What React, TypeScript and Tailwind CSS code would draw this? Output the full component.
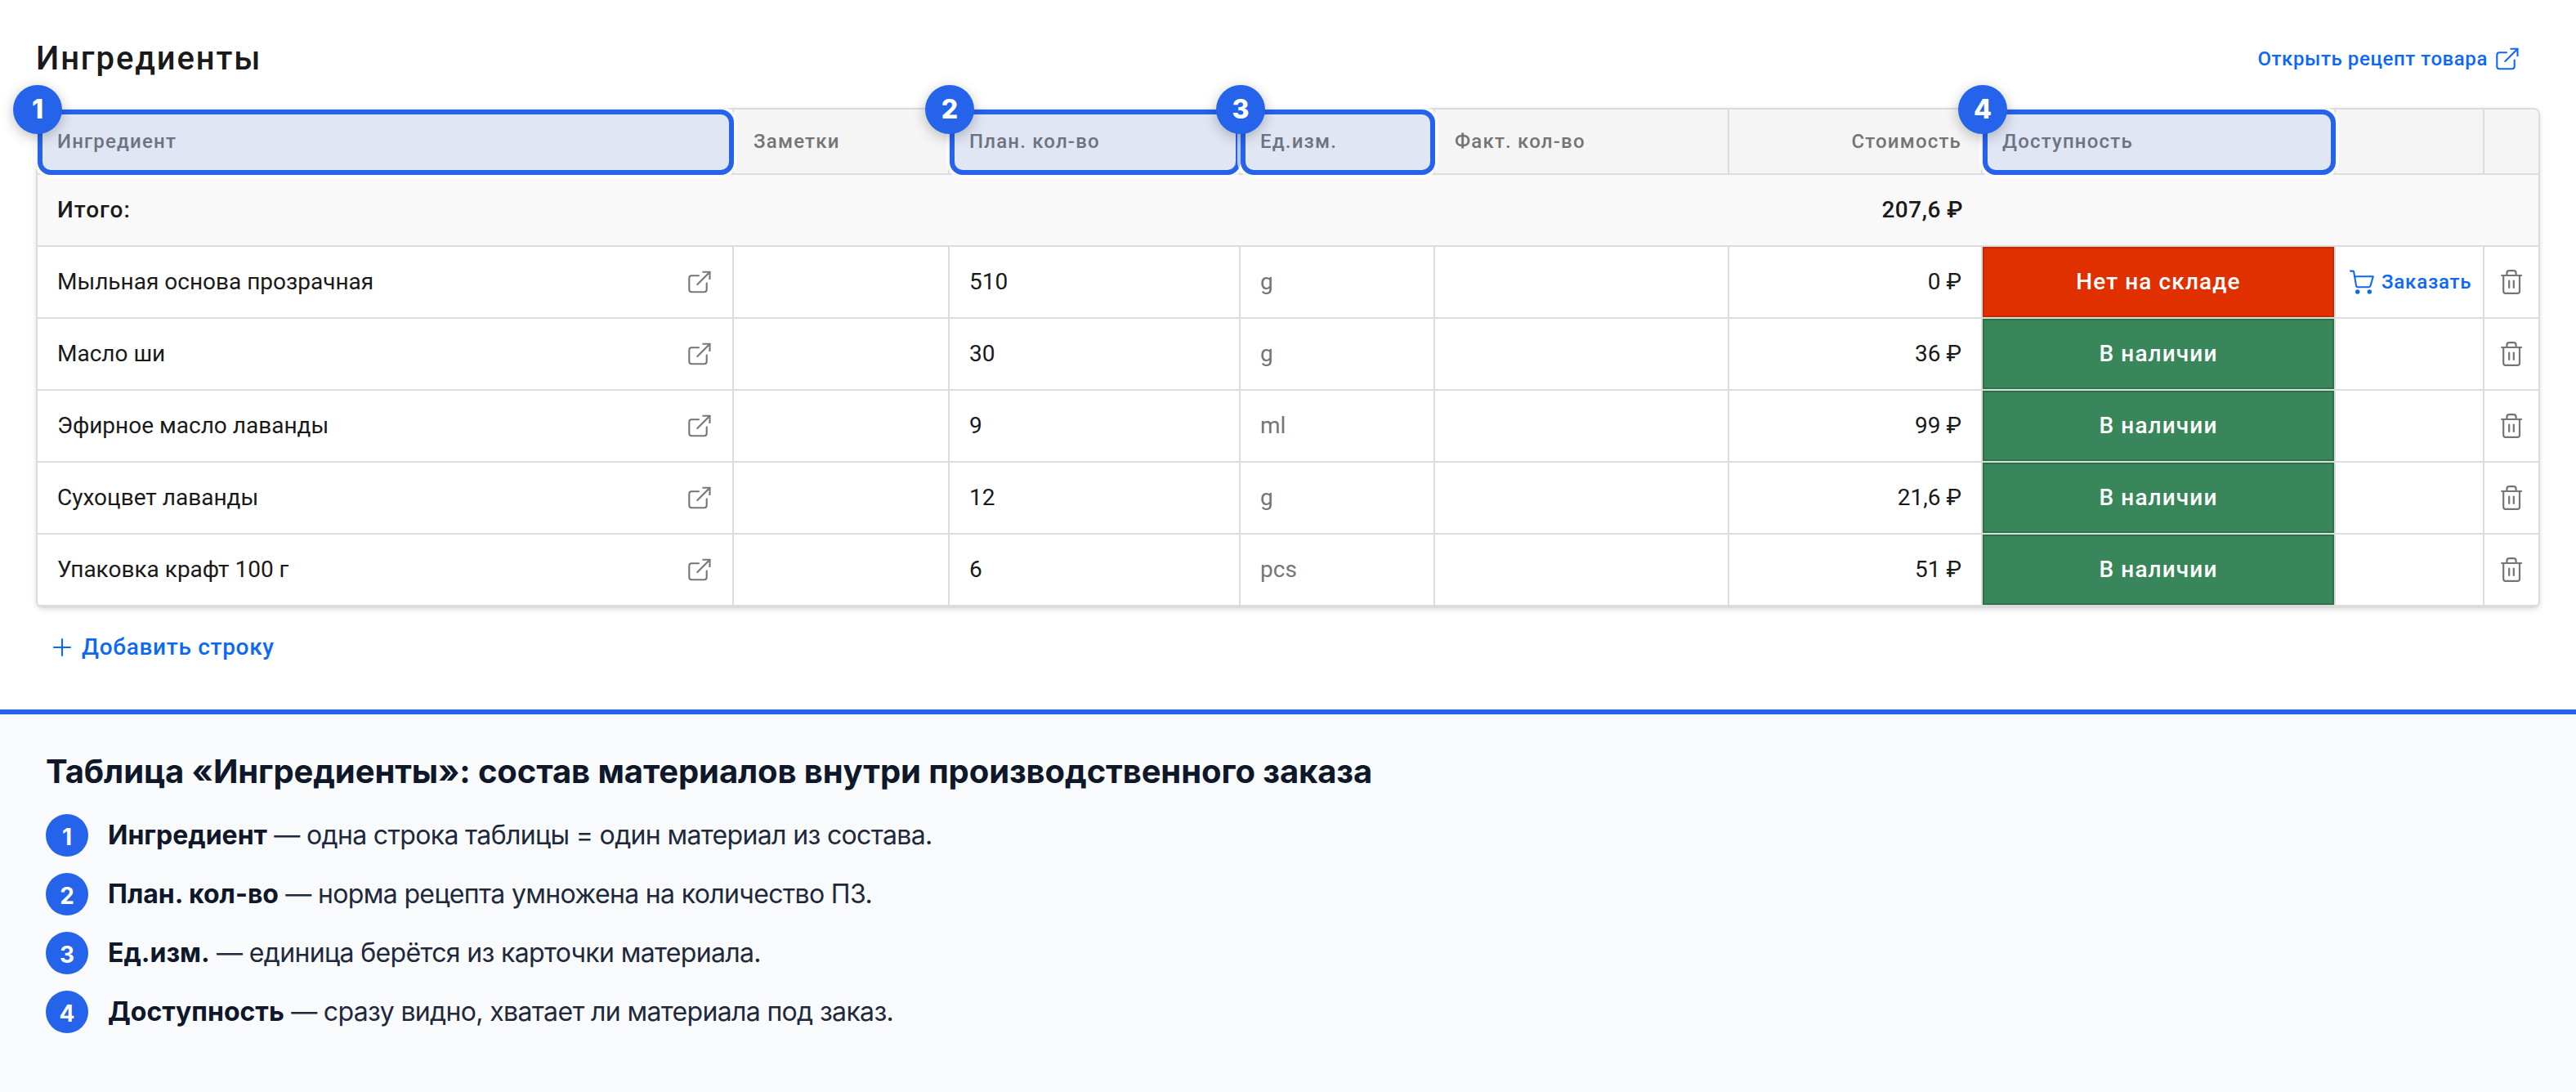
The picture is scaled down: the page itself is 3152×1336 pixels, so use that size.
import { clsx } from 'clsx'

const cols =
  'grid grid-cols-[852px_264px_356px_238px_360px_310px_432px_182px_66px]'

const headers = [
  { label: 'Ингредиент', mark: 1 },
  { label: 'Заметки' },
  { label: 'План. кол-во', mark: 2 },
  { label: 'Ед.изм.', mark: 3 },
  { label: 'Факт. кол-во' },
  { label: 'Стоимость', right: true },
  { label: 'Доступность', mark: 4 },
  { label: '' },
  { label: '' },
]

const rows = [
  { name: 'Мыльная основа прозрачная', qty: '510', unit: 'g', cost: '0 ₽', inStock: false },
  { name: 'Масло ши', qty: '30', unit: 'g', cost: '36 ₽', inStock: true },
  { name: 'Эфирное масло лаванды', qty: '9', unit: 'ml', cost: '99 ₽', inStock: true },
  { name: 'Сухоцвет лаванды', qty: '12', unit: 'g', cost: '21,6 ₽', inStock: true },
  { name: 'Упаковка крафт 100 г', qty: '6', unit: 'pcs', cost: '51 ₽', inStock: true },
]

const legend = [
  { term: 'Ингредиент', text: '— одна строка таблицы = один материал из состава.' },
  { term: 'План. кол-во', text: '— норма рецепта умножена на количество ПЗ.' },
  { term: 'Ед.изм.', text: '— единица берётся из карточки материала.' },
  { term: 'Доступность', text: '— сразу видно, хватает ли материала под заказ.' },
]

function OpenIcon() {
  return (
    <svg className="size-8 shrink-0" viewBox="0 0 32 32" fill="none" stroke="currentColor" strokeWidth="2.1" strokeLinecap="round" strokeLinejoin="round">
      <path d="M15 8.3H6.3a3 3 0 0 0-3 3v14a3 3 0 0 0 3 3h15.4a3 3 0 0 0 3-3V17.5" />
      <path d="M19.5 3.8h9v9.1" strokeLinecap="butt" strokeLinejoin="miter" />
      <path d="M28.3 4 13.3 19" />
    </svg>
  )
}

function CartIcon() {
  return (
    <svg className="size-8 shrink-0" viewBox="0 0 32 32" fill="none" stroke="currentColor" strokeWidth="2.1" strokeLinecap="round" strokeLinejoin="round">
      <path d="M2 2.6h3.2a.9.9 0 0 1 .9.7L9 20.4a2.2 2.2 0 0 0 2.2 1.8h13.2a2.2 2.2 0 0 0 2.1-1.7L29.8 9.2H7.2" />
      <circle cx="10.7" cy="28" r="2.7" fill="currentColor" stroke="none" />
      <circle cx="25.3" cy="28" r="2.7" fill="currentColor" stroke="none" />
    </svg>
  )
}

function TrashIcon() {
  return (
    <svg className="size-8 shrink-0" viewBox="0 0 32 32" fill="none" stroke="currentColor" strokeWidth="2.2" strokeLinecap="round" strokeLinejoin="round">
      <path d="M4.1 8h24" />
      <path d="M10.4 8V5.2a3 3 0 0 1 3-3h5.2a3 3 0 0 1 3 3V8" />
      <path d="M6.2 8v19.2a2.6 2.6 0 0 0 2.6 2.6h14.6a2.6 2.6 0 0 0 2.6-2.6V8" />
      <path d="M13.2 14.6v8.4M18.8 14.6v8.4" />
    </svg>
  )
}

function Highlight({ mark }: { mark: number }) {
  return (
    <>
      <div className="absolute left-0 top-0 -right-[2px] -bottom-[2px] rounded-2xl border-6 border-[#2563eb] bg-[#2563eb]/10 shadow-[0_0_0_4px_rgba(255,255,255,0.65)]" />
      <div className="absolute -left-[30px] -top-[30px] z-10 flex size-[60px] items-center justify-center rounded-full bg-[#2563eb] font-['Inter',sans-serif] text-[32px] leading-none font-extrabold tracking-normal text-white shadow-[0_4px_16px_rgba(0,0,0,0.25)]">
        {mark}
      </div>
    </>
  )
}

export default function App() {
  return (
    <div className="flex h-[1336px] w-[3152px] flex-col overflow-hidden bg-white font-['Roboto',sans-serif] text-[#1a1a1a]">
      <section className="h-[868px] px-11">
        {/* Title bar */}
        <div className="flex h-[132px] items-center justify-between pt-3 pr-6">
          <h1 className="text-[40px] leading-none font-medium tracking-[1.9px]">Ингредиенты</h1>
          <a className="flex items-center gap-2 text-[24px] leading-none font-medium text-[#0d68f5]">
            <span className="tracking-[0.6px]">Открыть рецепт товара</span>
            <OpenIcon />
          </a>
        </div>

        {/* Ingredients table */}
        <div className="rounded-lg border-2 border-[#dcdcdc] shadow-[0_2px_6px_rgba(0,0,0,0.12)]">
          <div className={clsx(cols, 'h-20 rounded-t-md bg-[#f5f5f5] text-[24px] font-medium tracking-[1.2px] text-[#757575]')}>
            {headers.map((h, i) => (
              <div
                key={i}
                className={clsx(
                  'relative flex items-center border-b-2 border-[#dcdcdc] px-6 leading-none',
                  i < 8 && 'border-r-2',
                  h.right && 'justify-end',
                )}
              >
                {h.label}
                {h.mark && <Highlight mark={h.mark} />}
              </div>
            ))}
          </div>

          <div className={clsx(cols, 'h-[88px] items-center border-b-2 border-[#dcdcdc] bg-[#f9f9f9] text-[28px] leading-none font-medium')}>
            <div className="pl-6 tracking-[1px]">Итого:</div>
            <div className="col-start-6 pr-6 text-right tracking-[0.5px]">207,6 ₽</div>
          </div>

          {rows.map((row) => (
            <div key={row.name} className={clsx(cols, 'h-[88px] border-b-2 border-[#dcdcdc] text-[28px] leading-none')}>
              <div className="flex items-center justify-between border-r-2 border-[#dcdcdc] px-6">
                {row.name}
                <span className="text-[#757575]">
                  <OpenIcon />
                </span>
              </div>
              <div className="border-r-2 border-[#dcdcdc]" />
              <div className="flex items-center border-r-2 border-[#dcdcdc] px-6">{row.qty}</div>
              <div className="flex items-center border-r-2 border-[#dcdcdc] px-6 text-[#757575]">{row.unit}</div>
              <div className="border-r-2 border-[#dcdcdc]" />
              <div className="flex items-center justify-end border-r-2 border-[#dcdcdc] px-6">{row.cost}</div>
              <div className="border-r-2 border-[#dcdcdc]">
                <div
                  className={clsx(
                    'flex h-full items-center justify-center border-2 font-medium tracking-[1.1px] text-white',
                    row.inStock ? 'border-[#2f7049] bg-[#388659]' : 'border-[#c02a04] bg-[#e03000]',
                  )}
                >
                  {row.inStock ? 'В наличии' : 'Нет на складе'}
                </div>
              </div>
              <div className="flex items-center gap-2 border-r-2 border-[#dcdcdc] pl-4 text-[24px] font-medium tracking-[0.8px] text-[#0d68f5]">
                {!row.inStock && (
                  <>
                    <CartIcon />
                    Заказать
                  </>
                )}
              </div>
              <div className="flex items-center justify-center text-[#757575]">
                <TrashIcon />
              </div>
            </div>
          ))}
        </div>

        <button className="mt-8 ml-5 flex h-8 items-center gap-3 text-[28px] leading-none font-medium text-[#0d68f5]">
          <svg className="size-6" viewBox="0 0 24 24" fill="none" stroke="currentColor" strokeWidth="2.1" strokeLinecap="round">
            <path d="M12 2v20M2 12h20" />
          </svg>
          <span className="tracking-[0.7px]">Добавить строку</span>
        </button>
      </section>

      {/* Legend */}
      <section className="flex-1 border-t-6 border-[#2563eb] bg-[#f8fafc] px-14 pt-[46px] font-['Inter',sans-serif] text-[#1e293b]">
        <h2 className="text-[40px] leading-[48px] font-bold tracking-[-0.1px] text-[#0f172a]">
          Таблица «Ингредиенты»: состав материалов внутри производственного заказа
        </h2>
        <ol className="mt-7 flex flex-col gap-5">
          {legend.map((item, i) => (
            <li key={item.term} className="flex h-[52px] items-center gap-6 text-[32px] leading-none">
              <span className="flex size-[52px] items-center justify-center rounded-full bg-[#2563eb] pt-[3px] text-[28px] font-bold text-white">
                {i + 1}
              </span>
              <p className="tracking-[-0.65px]">
                <strong className="font-bold tracking-normal text-[#0f172a]">{item.term}</strong> {item.text}
              </p>
            </li>
          ))}
        </ol>
      </section>
    </div>
  )
}
